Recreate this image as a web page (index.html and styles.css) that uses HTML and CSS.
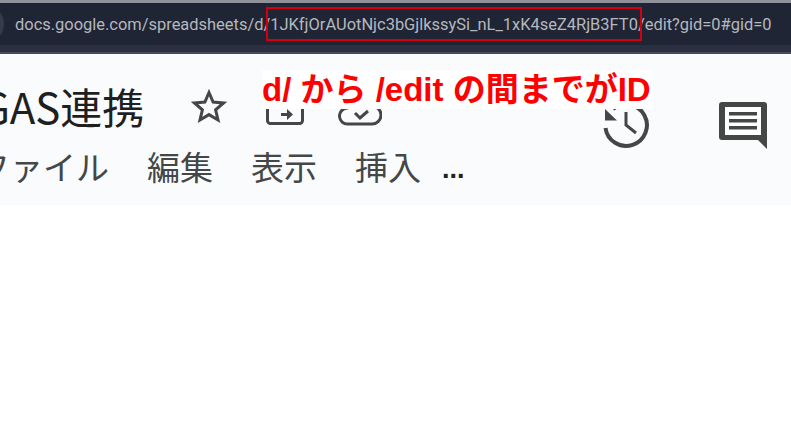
FILE: index.html
```html
<!DOCTYPE html>
<html lang="ja">
<head>
<meta charset="utf-8">
<title>GAS連携</title>
<link rel="stylesheet" href="styles.css">
</head>
<body>
<header class="browser">
  <div class="omnibox">
    <span class="site-chip"></span>
    <span class="url">docs.google.com/spreadsheets/d/<span class="id-box">1JKfjOrAUotNjc3bGjlkssySi_nL_1xK4seZ4RjB3FT0</span>/edit?gid=0#gid=0</span>
  </div>
</header>
<section class="sheet-head">
  <div class="title-row">
    <h1 class="doc-title">GAS連携</h1>
    <svg class="icon star" viewBox="0 0 36 36"><path d="M18 4.500l4.100 9.600 10.400.9-7.900 6.800 2.400 10.200-9-5.400-9 5.400 2.400-10.200-7.900-6.800 10.400-.9z" fill="none" stroke="#444746" stroke-width="3"/></svg>
    <svg class="icon move" viewBox="0 0 38 38"><rect x="1.500" y="3" width="35" height="32.500" rx="3" fill="none" stroke="#444746" stroke-width="3"/><path d="M15 25h6v-4l6 5.500-6 5.500v-4h-6z" fill="#444746"/></svg>
    <svg class="icon cloud" viewBox="0 0 44 38"><path d="M10 36a8 8 0 0 1-1-16 13 13 0 0 1 25-2 9 9 0 0 1 0 18z" fill="none" stroke="#444746" stroke-width="3"/><path d="M17 25l5 5 8-7" fill="none" stroke="#444746" stroke-width="3"/></svg>
    <span class="spacer"></span>
    <svg class="icon history" viewBox="0 0 48 48"><path d="M2.500 27A20.800 20.800 0 1 0 10 8" fill="none" stroke="#444746" stroke-width="4"/><path d="M2 8l12 11.500H2z" fill="#444746"/><path d="M23 11v13l10 8" fill="none" stroke="#444746" stroke-width="3"/></svg>
    <svg class="icon comment" viewBox="0 0 48 47"><path fill-rule="evenodd" d="M3 0h42a3 3 0 0 1 3 3v44l-9-9H3a3 3 0 0 1-3-3V3a3 3 0 0 1 3-3zM6 5v28h36V5z" fill="#444746"/><path d="M6 5h36v28H6z" fill="#fff"/><path d="M10 10h28v3.500H10zM10 17h28v3.500H10zM10 24h28v3.500H10z" fill="#444746"/></svg>
  </div>
  <nav class="menu-row">
    <span>ファイル</span>
    <span>編集</span>
    <span>表示</span>
    <span>挿入</span>
    <span class="more">...</span>
  </nav>
</section>
<p class="callout">d/ から /edit の間までがID</p>
</body>
</html>
```
FILE: styles.css
```css
* { box-sizing: border-box; }
html, body { margin: 0; padding: 0; }
body {
  position: relative;
  width: 791px;
  height: 427px;
  overflow: hidden;
  background: #fff;
  font-family: "Noto Sans CJK JP", "Liberation Sans", sans-serif;
}
.browser {
  height: 54px;
  background: #2a3040;
  border-top: 3px solid #8f929a;
  border-bottom: 2px solid #474b58;
}
.omnibox {
  display: flex;
  align-items: center;
  height: 42px;
  background: #1f2535;
}
.site-chip {
  width: 16px;
  height: 26px;
  margin-left: -12px;
  margin-right: 11px;
  border-radius: 50%;
  background: #363b49;
  flex: none;
}
.url {
  font-family: Roboto, "Liberation Sans", sans-serif;
  font-size: 16.450px;
  color: #b5b8bd;
  white-space: nowrap;
}
.id-box {
  position: relative;
  display: inline-block;
}
.id-box::before {
  content: "";
  position: absolute;
  left: -4px;
  right: -4px;
  top: -8px;
  bottom: -7px;
  border: 2px solid #d4000f;
}
.sheet-head {
  height: 151px;
  background: #f9fbfd;
  overflow: hidden;
}
.title-row {
  display: flex;
  align-items: center;
  height: 64px;
  margin-top: 20px;
  color: #1f1f1f;
}
.doc-title {
  margin: 0 0 0 -19px;
  font-family: "Noto Sans CJK JP", sans-serif;
  font-size: 42px;
  font-weight: 400;
  line-height: 1;
  white-space: nowrap;
}
.icon { flex: none; display: block; }
.star { width: 36px; height: 36px; margin-left: 47px; }
.move { width: 38px; height: 38px; margin-left: 39px; margin-top: 1px; }
.cloud { width: 44px; height: 38px; margin-left: 34px; margin-top: 1px; }
.spacer { flex: 1; }
.history { width: 48px; height: 48px; margin-top: 38px; margin-right: 68px; }
.comment { width: 48px; height: 47px; margin-top: 38px; margin-right: 24px; }
.menu-row {
  display: flex;
  align-items: center;
  gap: 38px;
  margin-top: 12px;
  margin-left: -23px;
  font-size: 33px;
  line-height: 1;
  color: #444746;
}
.menu-row span { white-space: nowrap; }
.menu-row .more {
  margin-left: -17px;
  margin-top: 5px;
  font-family: "Liberation Sans", sans-serif;
  font-size: 27px;
  font-weight: 700;
  color: #222;
}
.callout {
  position: absolute;
  left: 262px;
  top: 70px;
  margin: 0;
  padding: 0 2px 0 0;
  height: 39px;
  line-height: 39px;
  background: #fff;
  color: #ff0000;
  font-family: "Liberation Sans", "Noto Sans CJK JP", sans-serif;
  font-size: 33px;
  font-weight: 700;
  white-space: nowrap;
}
```
